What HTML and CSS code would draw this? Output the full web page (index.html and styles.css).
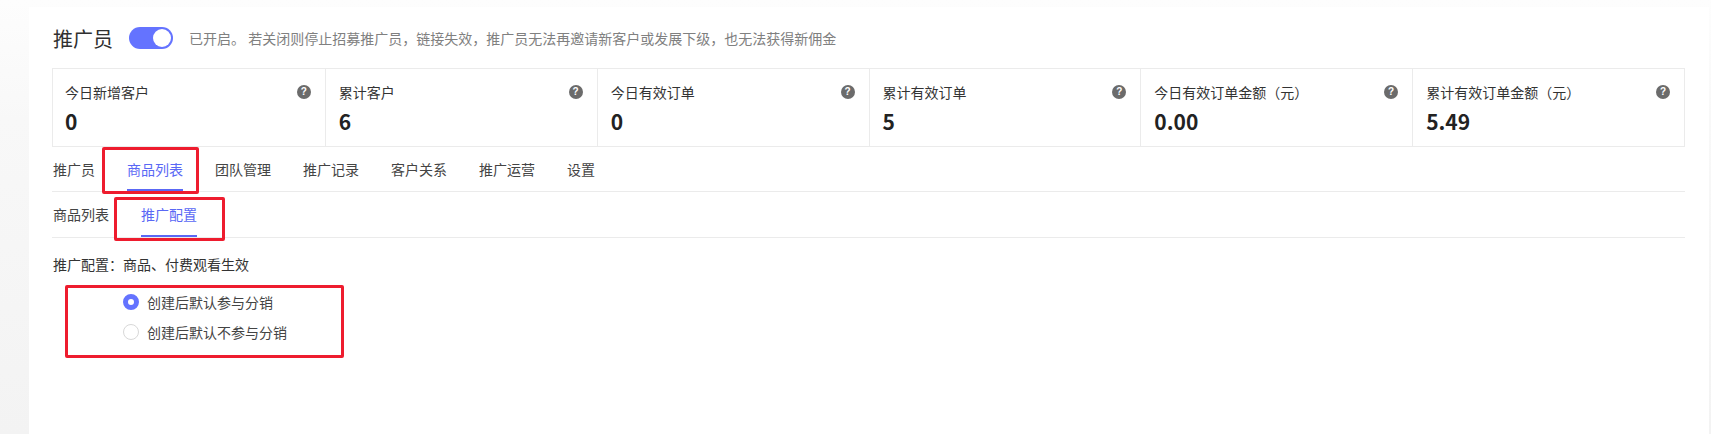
FILE: index.html
```html
<!DOCTYPE html>
<html lang="zh-CN">
<head>
<meta charset="utf-8">
<title>推广员</title>
<link rel="stylesheet" href="styles.css">
</head>
<body>
<main class="card">
  <header class="head">
    <h1 class="title">推广员</h1>
    <span class="switch"><span class="knob"></span></span>
    <p class="desc">已开启。 若关闭则停止招募推广员，链接失效，推广员无法再邀请新客户或发展下级，也无法获得新佣金</p>
  </header>
  <section class="stats">
    <div class="stat"><div class="stat-top"><span>今日新增客户</span><i class="help">?</i></div><b class="num">0</b></div>
    <div class="stat"><div class="stat-top"><span>累计客户</span><i class="help">?</i></div><b class="num">6</b></div>
    <div class="stat"><div class="stat-top"><span>今日有效订单</span><i class="help">?</i></div><b class="num">0</b></div>
    <div class="stat"><div class="stat-top"><span>累计有效订单</span><i class="help">?</i></div><b class="num">5</b></div>
    <div class="stat"><div class="stat-top"><span>今日有效订单金额（元）</span><i class="help">?</i></div><b class="num">0.00</b></div>
    <div class="stat"><div class="stat-top"><span>累计有效订单金额（元）</span><i class="help">?</i></div><b class="num">5.49</b></div>
  </section>
  <nav class="tabs tabs-main">
    <a class="tab">推广员</a>
    <a class="tab active">商品列表<span class="mark mark-main"></span></a>
    <a class="tab">团队管理</a>
    <a class="tab">推广记录</a>
    <a class="tab">客户关系</a>
    <a class="tab">推广运营</a>
    <a class="tab">设置</a>
  </nav>
  <nav class="tabs">
    <a class="tab">商品列表</a>
    <a class="tab active">推广配置<span class="mark mark-sub"></span></a>
  </nav>
  <p class="label">推广配置：商品、付费观看生效</p>
  <div class="options">
    <span class="mark mark-options"></span>
    <label class="option"><span class="radio on"></span>创建后默认参与分销</label>
    <label class="option"><span class="radio"></span>创建后默认不参与分销</label>
  </div>
</main>
</body>
</html>
```
FILE: styles.css
```css
* { box-sizing: border-box; }
html, body { margin: 0; height: 100%; }
body {
  height: 434px;
  overflow: hidden;
  padding: 7px 2px 0 29px;
  background: linear-gradient(180deg, #fdfdfd 0, #f8f8f8 120px, #f3f3f3 434px);
  font-family: "Noto Sans CJK SC", "Noto Sans", sans-serif;
  font-size: 14px;
  color: #333;
}
.card {
  height: 427px;
  background: #fff;
  padding: 20px 24px 0 23px;
}
.head { display: flex; align-items: center; height: 22px; }
.title { margin: 2px 16px 0 1px; font-size: 20px; font-weight: 400; line-height: 24px; color: #303030; }
.switch {
  position: relative;
  width: 44px;
  height: 22px;
  border-radius: 11px;
  background: #6473ff;
}
.knob {
  position: absolute;
  top: 2px;
  right: 2px;
  width: 18px;
  height: 18px;
  border-radius: 50%;
  background: #fff;
}
.desc { margin: 0 0 0 16px; line-height: 20px; color: #808080; white-space: pre; }
.stats {
  display: grid;
  grid-template-columns: repeat(6, 1fr);
  height: 79px;
  margin-top: 19px;
  border: 1px solid #ebebeb;
}
.stat { padding: 13px 12px 0 13px; border-left: 1px solid #ebebeb; }
.stat:first-child { border-left: 0; padding-left: 12px; }
.stat-top { display: flex; justify-content: space-between; align-items: center; height: 20px; line-height: 20px; color: #333; }
.help {
  width: 14px;
  height: 14px;
  margin-right: 2px;
  border-radius: 50%;
  background: #6b6b6b;
  color: #fff;
  font: 700 10px/14px "Liberation Sans", sans-serif;
  text-align: center;
}
.num { display: block; margin-top: 4px; font-size: 21px; line-height: 30px; font-weight: 700; color: #222; }
.tabs {
  display: flex;
  gap: 32px;
  height: 46px;
  padding: 0 0 0 1px;
  border-bottom: 1px solid #ebebeb;
}
.tabs-main { height: 45px; }
.tab { position: relative; display: block; height: 45px; line-height: 45px; color: #444; }
.tabs-main .tab { height: 44px; line-height: 44px; }
.tab.active { color: #5a68f5; border-bottom: 2px solid #5a68f5; }
.mark {
  position: absolute;
  border: 3px solid #ee1c2e;
  border-radius: 2px;
  pointer-events: none;
}
.mark-main { left: -25px; top: 0; width: 97px; height: 47px; }
.mark-sub { left: -27px; top: 5px; width: 111px; height: 44px; }
.label { margin: 0; padding: 16px 0 0 1px; height: 47px; line-height: 20px; color: #333; }
.options {
  position: relative;
  display: flex;
  flex-direction: column;
  gap: 10px;
  padding: 7px 0 0 71px;
}
.option { display: flex; align-items: center; gap: 8px; height: 20px; line-height: 20px; color: #444; }
.radio { width: 16px; height: 16px; border: 1px solid #d8d8d8; border-radius: 50%; background: #fff; }
.radio.on { border: 5px solid #6473ff; }
.mark-options { left: 13px; top: 0; width: 279px; height: 73px; }
```
